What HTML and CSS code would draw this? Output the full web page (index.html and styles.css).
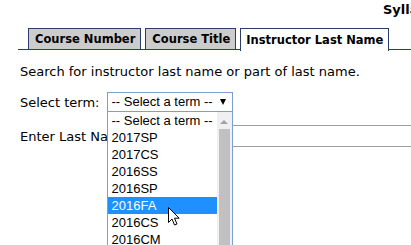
FILE: index.html
```html
<!DOCTYPE html>
<html lang="en">
<head>
<meta charset="UTF-8" />
<title>Syllabus Search</title>
<link rel="stylesheet" href="styles.css">
</head>
<body>

<div class="site-title">Syllabus Search</div>

<ul class="tabs">
  <li class="tab">Course Number</li>
  <li class="tab">Course Title</li>
  <li class="tab active">Instructor Last Name</li>
</ul>

<main>
  <p class="hint">Search for instructor last name or part of last name.</p>

  <div class="row">
    <label class="lbl">Select term:</label>
    <div class="select">
      <span class="select-text">-- Select a term --</span>
      <span class="select-arrow"></span>

      <div class="dropdown">
        <ul class="options">
          <li>-- Select a term --</li>
          <li>2017SP</li>
          <li>2017CS</li>
          <li>2016SS</li>
          <li>2016SP</li>
          <li class="hover">2016FA</li>
          <li>2016CS</li>
          <li>2016CM</li>
        </ul>
        <div class="scrollbar">
          <span class="scroll-up"></span>
          <span class="thumb"></span>
        </div>
      </div>

      <svg class="cursor" width="13" height="20" viewBox="0 0 13 20">
        <path d="M0.5 0.5 L0.5 15.5 L4 12 L6.5 18 L9 17 L6.5 11.2 L11.2 11.2 Z" fill="#fff" stroke="#000" stroke-width="1" stroke-linejoin="miter"/>
      </svg>
    </div>
  </div>

  <div class="row row-name">
    <label class="lbl">Enter Last Name:</label>
    <input type="text" class="name-input" />
  </div>
</main>

</body>
</html>
```

FILE: styles.css
```css
html, body {
  margin: 0;
  padding: 0;
  overflow: hidden;
}
body {
  font-family: "DejaVu Sans", Verdana, sans-serif;
  font-size: 13px;
  color: #000;
  background: #fff;
  width: 411px;
  height: 245px;
}
.site-title {
  padding: 2px 0 0 383px;
  height: 26px;
  font-size: 13px;
  font-weight: bold;
  white-space: nowrap;
  line-height: 16px;
}
.tabs {
  list-style: none;
  margin: 0 0 0 18px;
  padding: 0 0 0 10px;
  display: flex;
  gap: 4px;
  border-bottom: 1px solid #2b3d6b;
  height: 21px;
}
.tab {
  border: 1px solid #2b3d6b;
  border-bottom: none;
  background: #cccccc;
  font-size: 11.5px;
  font-weight: bold;
  line-height: 20px;
  padding: 0 5px 0 6px;
  white-space: nowrap;
}
.tab.active {
  background: #fff;
  height: 21px;
  padding: 1px 5px 0 5px;
  line-height: 20px;
}
main {
  padding: 0 0 0 20px;
}
.hint {
  margin: 14px 0 0 0;
  line-height: 15px;
}
.row {
  display: flex;
  align-items: center;
  margin-top: 13px;
}
.lbl {
  margin-right: 7px;
  line-height: 15px;
  white-space: nowrap;
  flex: none;
}
.select {
  position: relative;
  width: 124px;
  height: 18px;
  border: 1px solid #7b9ed6;
  font-family: "Liberation Sans", Arial, sans-serif;
  font-size: 13px;
  line-height: 18px;
  display: flex;
  align-items: center;
  z-index: 2;
}
.select-text {
  padding-left: 4px;
  flex: 1;
}
.select-arrow {
  width: 0;
  height: 0;
  border-left: 3.5px solid transparent;
  border-right: 3.5px solid transparent;
  border-top: 6px solid #000;
  margin-right: 6px;
}
.dropdown {
  position: absolute;
  top: 19px;
  left: -1px;
  width: 124px;
  height: 140px;
  border: 1px solid #7b9ed6;
  border-top: none;
  background: #fff;
  display: flex;
}
.options {
  list-style: none;
  margin: 0;
  padding: 0;
  flex: 1;
}
.options li {
  height: 17px;
  line-height: 17px;
  padding-left: 4px;
  white-space: nowrap;
  overflow: hidden;
}
.options li.hover {
  background: #1e90ff;
  color: #fff;
}
.scrollbar {
  width: 15px;
  background: #f0f0f0;
  display: flex;
  flex-direction: column;
  align-items: center;
}
.scroll-up {
  margin-top: 8px;
  width: 0;
  height: 0;
  border-left: 4px solid transparent;
  border-right: 4px solid transparent;
  border-bottom: 4px solid #a3a3a3;
}
.thumb {
  margin-top: 5px;
  width: 11px;
  flex: 1;
  background: #c1c1c1;
}
.cursor {
  position: absolute;
  left: 60px;
  top: 114px;
}
.row-name {
  margin-top: 13px;
}
.name-input {
  flex: none;
  width: 300px;
  height: 18px;
  border: 1px solid #a0a0a0;
  margin: 0;
  padding: 1px 2px;
}
```
